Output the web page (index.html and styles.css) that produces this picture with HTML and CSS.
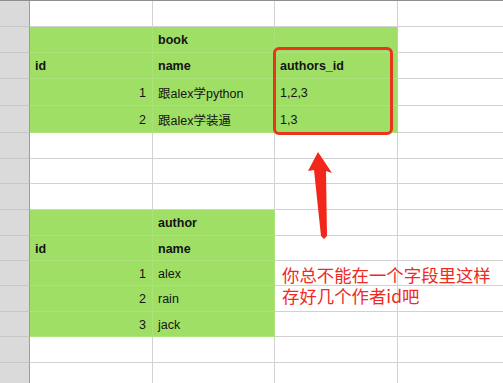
FILE: index.html
```html
<!DOCTYPE html>
<html lang="zh">
<head>
<meta charset="utf-8">
<link rel="stylesheet" href="styles.css">
</head>
<body>
<div class="page">
  <div class="sheet">
    <!-- row 1 -->
    <div class="gut"></div><div class="c"></div><div class="c"></div><div class="c"></div><div class="c last"></div>
    <!-- row 2 -->
    <div class="gut"></div><div class="c g"></div><div class="c g b">book</div><div class="c g"></div><div class="c last"></div>
    <!-- row 3 -->
    <div class="gut"></div><div class="c g b">id</div><div class="c g b">name</div><div class="c g b">authors_id</div><div class="c last"></div>
    <!-- row 4 -->
    <div class="gut"></div><div class="c g num">1</div><div class="c g">跟alex学python</div><div class="c g">1,2,3</div><div class="c last"></div>
    <!-- row 5 -->
    <div class="gut"></div><div class="c g num">2</div><div class="c g">跟alex学装逼</div><div class="c g">1,3</div><div class="c last"></div>
    <!-- row 6 -->
    <div class="gut"></div><div class="c"></div><div class="c"></div><div class="c"></div><div class="c last"></div>
    <!-- row 7 -->
    <div class="gut"></div><div class="c"></div><div class="c"></div><div class="c"></div><div class="c last"></div>
    <!-- row 8 -->
    <div class="gut"></div><div class="c"></div><div class="c"></div><div class="c"></div><div class="c last"></div>
    <!-- row 9 -->
    <div class="gut"></div><div class="c g"></div><div class="c g b">author</div><div class="c"></div><div class="c last"></div>
    <!-- row 10 -->
    <div class="gut"></div><div class="c g b">id</div><div class="c g b">name</div><div class="c"></div><div class="c last"></div>
    <!-- row 11 -->
    <div class="gut"></div><div class="c g num">1</div><div class="c g">alex</div><div class="c"></div><div class="c last"></div>
    <!-- row 12 -->
    <div class="gut"></div><div class="c g num">2</div><div class="c g">rain</div><div class="c"></div><div class="c last"></div>
    <!-- row 13 -->
    <div class="gut"></div><div class="c g num">3</div><div class="c g">jack</div><div class="c"></div><div class="c last"></div>
    <!-- row 14 -->
    <div class="gut"></div><div class="c"></div><div class="c"></div><div class="c"></div><div class="c last"></div>
    <!-- row 15 -->
    <div class="gut"></div><div class="c"></div><div class="c"></div><div class="c"></div><div class="c last"></div>
  </div>

  <div class="highlight"></div>
  <svg class="arrow" width="503" height="383" viewBox="0 0 503 383">
    <polygon points="318,152 332,173 326,171 327,236 324,239 321,236 314,170 308,171" fill="#f2261b"/>
  </svg>
  <div class="note">你总不能在一个字段里这样<br>存好几个作者id吧</div>
</div>
</body>
</html>
```

FILE: styles.css
```css
html, body {
  margin: 0;
  padding: 0;
  background: #ffffff;
}

.page {
  position: relative;
  width: 503px;
  height: 383px;
  overflow: hidden;
  font-family: "Liberation Sans", Arial, "Noto Sans CJK SC", sans-serif;
}

.sheet {
  display: grid;
  grid-template-columns: 30px 123px 122px 123px 1fr;
  grid-template-rows: 26px 26px 26px 27px 27px 26px 25px 26px 26px 25px 25px 26px 25px 26px 30px;
  border-top: 1px solid #8e8e8e;
}

.gut {
  background: #dadada;
  border-right: 1px solid #9c9c9c;
  border-bottom: 1px solid #c6c6c6;
}

.c {
  box-sizing: border-box;
  border-right: 1px solid #d2d2d2;
  border-bottom: 1px solid #d2d2d2;
  display: flex;
  align-items: center;
  padding: 1px 6px 0 5px;
  font-size: 12.5px;
  color: #141414;
  white-space: nowrap;
}

.c.last {
  border-right: none;
}

.c.g {
  background: #9fdf66;
  border-right-color: #a9e276;
  border-bottom-color: #abe37a;
}

.c.b {
  font-weight: bold;
}

.c.num {
  justify-content: flex-end;
}

.highlight {
  position: absolute;
  left: 273px;
  top: 47px;
  width: 120px;
  height: 88px;
  box-sizing: border-box;
  border: 3px solid #e8361e;
  border-radius: 6px;
}

.arrow {
  position: absolute;
  left: 0;
  top: 0;
}

.note {
  position: absolute;
  left: 282px;
  top: 264px;
  font-family: "Noto Sans CJK SC", sans-serif;
  font-size: 17.4px;
  line-height: 21px;
  color: #ef2a22;
  white-space: nowrap;
}
```
